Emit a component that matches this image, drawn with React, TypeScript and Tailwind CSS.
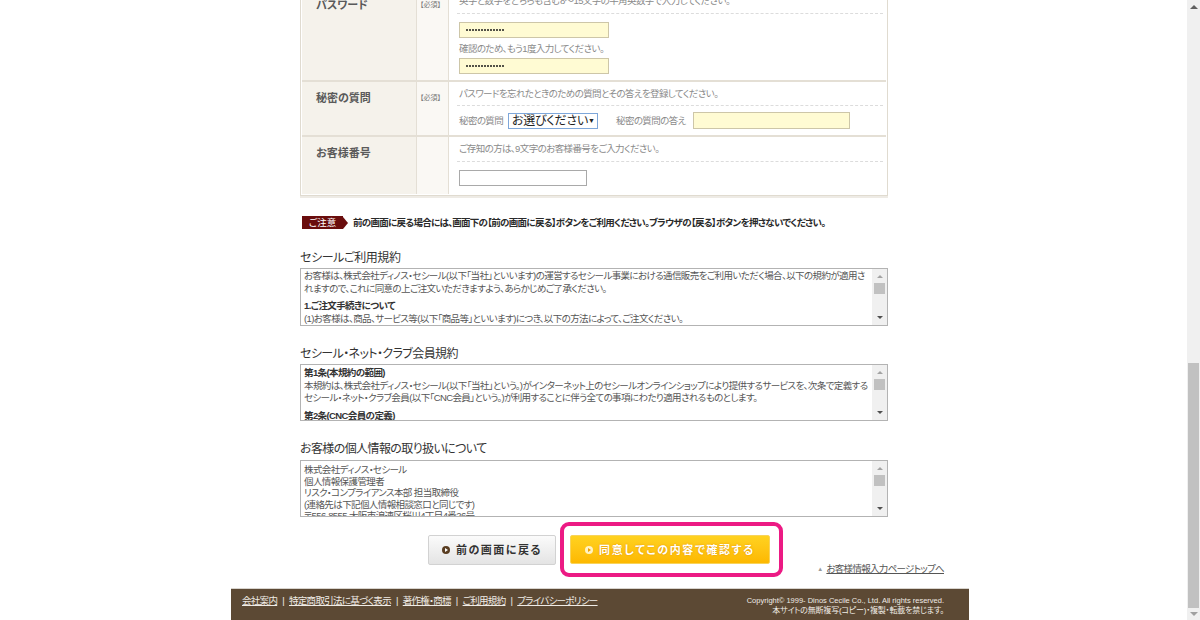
import React from "react";

function Dots() {
  return (
    <div className="flex gap-[1px] pl-[6px]">
      {Array.from({ length: 13 }).map((_, i) => (
        <span key={i} className="block w-[2px] h-[2px] rounded-full bg-[#1a1a1a]" />
      ))}
    </div>
  );
}

function PwInput() {
  return (
    <div className="w-[150px] h-[16px] bg-[#fffbd3] border border-[#cdc6a8] flex items-center">
      <Dots />
    </div>
  );
}

function BoxScroll() {
  return (
    <div className="w-[15px] h-full bg-[#f0f0f0] flex flex-col items-center shrink-0">
      <div className="mt-[6px] w-0 h-0 border-l-[3px] border-r-[3px] border-b-[3px] border-l-transparent border-r-transparent border-b-[#a3a3a3]" />
      <div className="mt-[5px] w-[11px] h-[11px] bg-[#c1c1c1]" />
      <div className="mt-auto mb-[6px] w-0 h-0 border-l-[3px] border-r-[3px] border-t-[3px] border-l-transparent border-r-transparent border-t-[#505050]" />
    </div>
  );
}

function Label({ text, required }: { text: string; required?: boolean }) {
  return (
    <>
      <div className="w-[114px] shrink-0 bg-[#f5f2eb] pl-[14px] pt-[9px] text-[11px] leading-[14px] font-bold text-[#5a5a5a] whitespace-nowrap">
        {text}
      </div>
      <div className="w-[33px] shrink-0 bg-[#faf8f4] border-l border-r border-[#e4dfd5] pl-[3px] pt-[10px] text-[7px] leading-[12px] text-[#777] whitespace-nowrap">
        {required ? "【必須】" : ""}
      </div>
    </>
  );
}

export default function App() {
  return (
    <div className="flex w-[1200px] h-[620px] overflow-hidden bg-white font-['Liberation_Sans','Noto_Sans_CJK_JP',sans-serif] [font-feature-settings:'palt']">
      <div className="flex-1 overflow-hidden">
        <div className="ml-[231px] w-[738px]">
          {/* form table */}
          <div className="ml-[69px] w-[588px] -mt-[13px] border border-[#e0dbd0] p-px shadow-[0_2px_0_#eeebe5]">
            {/* password row */}
            <div className="flex border-b-2 border-[#e4dfd5]">
              <Label text="パスワード" required />
              <div className="flex-1 bg-white pl-[8px] pr-[3px] text-[9.5px] tracking-[-0.6px] text-[#8a8a8a] whitespace-nowrap">
                <div className="h-[25px] flex items-center pl-[2px] border-b border-dashed border-[#dcdcdc] leading-[12px]">
                  英字と数字をどちらも含む8～15文字の半角英数字で入力してください。
                </div>
                <div className="pl-[2px] pt-[8px] pb-[6px]">
                  <PwInput />
                  <div className="mt-[5px] leading-[12px]">確認のため、もう1度入力してください。</div>
                  <div className="mt-[3px]">
                    <PwInput />
                  </div>
                </div>
              </div>
            </div>
            {/* secret question row */}
            <div className="flex border-b-2 border-[#e4dfd5]">
              <Label text="秘密の質問" required />
              <div className="flex-1 bg-white pl-[8px] pr-[3px] text-[9.5px] tracking-[-0.6px] text-[#8a8a8a] whitespace-nowrap">
                <div className="h-[24px] flex items-center pl-[2px] border-b border-dashed border-[#dcdcdc] leading-[12px]">
                  パスワードを忘れたときのための質問とその答えを登録してください。
                </div>
                <div className="h-[29px] flex items-center pl-[2px]">
                  <span className="w-[49px] shrink-0 leading-[12px]">秘密の質問</span>
                  <div className="w-[90px] h-[16px] shrink-0 border border-[#7ea7da] bg-white flex items-center pl-[3px] pr-[3px] tracking-normal">
                    <span className="text-[12px] leading-[14px] tracking-[-0.2px] text-[#222] whitespace-nowrap">お選びください</span>
                    <span className="ml-auto text-[7px] leading-none text-[#222]">▼</span>
                  </div>
                  <span className="ml-[18px] w-[77px] shrink-0 leading-[12px]">秘密の質問の答え</span>
                  <div className="w-[157px] h-[17px] shrink-0 bg-[#fffbd3] border border-[#cdc6a8]" />
                </div>
              </div>
            </div>
            {/* customer number row */}
            <div className="flex">
              <Label text="お客様番号" />
              <div className="flex-1 bg-white pl-[8px] pr-[3px] text-[9.5px] tracking-[-0.6px] text-[#8a8a8a] whitespace-nowrap">
                <div className="h-[25px] flex items-center pl-[2px] border-b border-dashed border-[#dcdcdc] leading-[12px]">
                  ご存知の方は、9文字のお客様番号をご入力ください。
                </div>
                <div className="pl-[2px] pt-[8px] pb-[8px]">
                  <div className="w-[128px] h-[16px] bg-white border border-[#a9a9a9]" />
                </div>
              </div>
            </div>
          </div>

          {/* notice */}
          <div className="ml-[71px] mt-[20px] flex items-center">
            <div className="flex items-center shrink-0">
              <div className="h-[13px] w-[41px] bg-[#6a0d0d] text-white text-[9.5px] leading-[13px] text-center">ご注意</div>
              <div className="w-0 h-0 border-t-[6.5px] border-b-[6.5px] border-l-[5px] border-t-transparent border-b-transparent border-l-[#6a0d0d]" />
            </div>
            <span className="ml-[5px] text-[9.5px] leading-[13px] font-bold text-[#2a2a2a] whitespace-nowrap tracking-[-0.7px]">
              前の画面に戻る場合には、画面下の【前の画面に戻る】ボタンをご利用ください。ブラウザの【戻る】ボタンを押さないでください。
            </span>
          </div>

          {/* terms */}
          <div className="ml-[69px] w-[588px]">
            <div className="mt-[22px] mb-[3px] text-[12px] leading-[14px] tracking-[-0.4px] text-[#333]">セシールご利用規約</div>
            <div className="h-[58px] border border-[#b3b3b3] flex">
              <div className="flex-1 overflow-hidden pl-[3px] pt-[1px] text-[9.5px] tracking-[-0.6px] leading-[12.5px] text-[#555] whitespace-nowrap">
                <div>お客様は、株式会社ディノス・セシール(以下「当社」といいます)の運営するセシール事業における通信販売をご利用いただく場合、以下の規約が適用さ</div>
                <div>れますので、これに同意の上ご注文いただきますよう、あらかじめご了承ください。</div>
                <div className="mt-[5px] font-bold text-[#333]">1.ご注文手続きについて</div>
                <div>(1)お客様は、商品、サービス等(以下「商品等」といいます)につき、以下の方法によって、ご注文ください。</div>
              </div>
              <BoxScroll />
            </div>

            <div className="mt-[21px] mb-[3px] text-[12px] leading-[14px] tracking-[-0.6px] text-[#333]">セシール・ネット・クラブ会員規約</div>
            <div className="h-[57px] border border-[#b3b3b3] flex">
              <div className="flex-1 overflow-hidden pl-[3px] pt-[2px] text-[9.5px] tracking-[-0.6px] leading-[12.5px] text-[#555] whitespace-nowrap">
                <div className="font-bold text-[#333]">第1条(本規約の範囲)</div>
                <div>本規約は、株式会社ディノス・セシール(以下「当社」という。)がインターネット上のセシールオンラインショップにより提供するサービスを、次条で定義する</div>
                <div>セシール・ネット・クラブ会員(以下「CNC会員」という。)が利用することに伴う全ての事項にわたり適用されるものとします。</div>
                <div className="mt-[5px] font-bold text-[#333]">第2条(CNC会員の定義)</div>
              </div>
              <BoxScroll />
            </div>

            <div className="mt-[21px] mb-[4px] text-[12px] leading-[14px] tracking-[-0.6px] text-[#333]">お客様の個人情報の取り扱いについて</div>
            <div className="h-[57px] border border-[#b3b3b3] flex">
              <div className="flex-1 overflow-hidden pl-[3px] pt-[3px] text-[9.5px] tracking-[-0.6px] leading-[11.5px] text-[#555] whitespace-nowrap">
                <div>株式会社ディノス・セシール</div>
                <div>個人情報保護管理者</div>
                <div>リスク・コンプライアンス本部 担当取締役</div>
                <div>(連絡先は下記個人情報相談窓口と同じです)</div>
                <div>〒556-8555 大阪市浪速区桜川4丁目4番26号</div>
              </div>
              <BoxScroll />
            </div>
          </div>

          {/* buttons */}
          <div className="mt-[5px] pl-[197px] pr-[25px] flex items-center">
            <div className="w-[128px] h-[30px] shrink-0 rounded-[2px] border border-[#d2d2d2] bg-gradient-to-b from-[#fbfbfb] to-[#e4e4e4] flex items-center justify-center">
              <span className="w-[8px] h-[8px] rounded-full bg-[#5a3e22] flex items-center justify-center">
                <span className="w-0 h-0 border-t-[2px] border-b-[2px] border-l-[3px] border-t-transparent border-b-transparent border-l-white ml-[1px]" />
              </span>
              <span className="ml-[6px] text-[11px] leading-[14px] font-bold text-[#333] tracking-[1.5px] whitespace-nowrap">前の画面に戻る</span>
            </div>
            <div className="ml-[4px] w-[223px] h-[55px] shrink-0 rounded-[9px] border-[4px] border-[#ec1a84] bg-white flex items-center pl-[6px]">
              <div className="w-[200px] h-[29px] rounded-[2px] border border-[#f8d35a] bg-gradient-to-b from-[#ffd21f] to-[#fdb800] flex items-center justify-center">
                <span className="w-[8px] h-[8px] rounded-full bg-[#fff3c4] flex items-center justify-center">
                  <span className="w-0 h-0 border-t-[2px] border-b-[2px] border-l-[3px] border-t-transparent border-b-transparent border-l-[#f0a000] ml-[1px]" />
                </span>
                <span className="ml-[6px] text-[11px] leading-[14px] font-bold text-white tracking-[1.6px] whitespace-nowrap [text-shadow:0_0_2px_#e09000]">同意してこの内容で確認する</span>
              </div>
            </div>
            <div className="ml-auto self-end mb-[2px] flex items-center text-[9.5px] leading-[12px] tracking-[-0.7px] text-[#555] whitespace-nowrap">
              <span className="text-[6px] text-[#999] mr-[4px]">▲</span>
              <span className="underline">お客様情報入力ページトップへ</span>
            </div>
          </div>

          {/* footer */}
          <div className="mt-[11px] h-[40px] bg-[#5c4934] border-t border-[#d8d4ce] flex justify-between pl-[11px] pr-[25px]">
            <div className="pt-[6px] flex items-start text-[9.5px] leading-[12px] tracking-[-0.7px] text-[#f0ece6] whitespace-nowrap">
              <span className="underline">会社案内</span>
              <span className="mx-[5px]">|</span>
              <span className="underline">特定商取引法に基づく表示</span>
              <span className="mx-[5px]">|</span>
              <span className="underline">著作権・商標</span>
              <span className="mx-[5px]">|</span>
              <span className="underline">ご利用規約</span>
              <span className="mx-[5px]">|</span>
              <span className="underline">プライバシーポリシー</span>
            </div>
            <div className="pt-[7px] text-right text-[7.5px] leading-[10px] text-[#f0ece6] whitespace-nowrap">
              <div>Copyright© 1999- Dinos Cecile Co., Ltd. All rights reserved.</div>
              <div className="text-[8px] tracking-[-0.2px]">本サイトの無断複写(コピー)・複製・転載を禁じます。</div>
            </div>
          </div>
        </div>
      </div>

      {/* page scrollbar */}
      <div className="w-[13px] h-full bg-[#f0f0f0] flex flex-col items-center shrink-0">
        <div className="mt-[5px] w-0 h-0 border-l-[4px] border-r-[4px] border-b-[4px] border-l-transparent border-r-transparent border-b-[#606060]" />
        <div className="mt-[354px] w-[11px] h-[245px] bg-[#c1c1c1]" />
        <div className="mt-auto mb-[4px] w-0 h-0 border-l-[4px] border-r-[4px] border-t-[4px] border-l-transparent border-r-transparent border-t-[#a0a0a0]" />
      </div>
    </div>
  );
}
